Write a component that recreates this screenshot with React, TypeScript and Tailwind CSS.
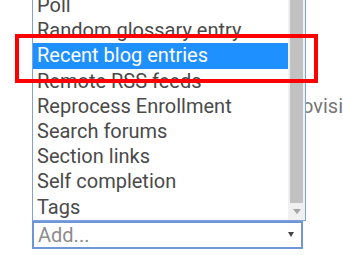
import React from 'react'

const options = [
  'Poll',
  'Random glossary entry',
  'Recent blog entries',
  'Remote RSS feeds',
  'Reprocess Enrollment',
  'Search forums',
  'Section links',
  'Self completion',
  'Tags',
]

const selected = 'Recent blog entries'

function ScrollBar() {
  return (
    <div className="flex w-[17px] flex-col bg-[#f0f0f0]">
      <div className="mx-[2px] flex-1 bg-[#c1c1c1]" />
      <div className="flex h-[17px] items-center justify-center">
        <svg width="8" height="5" viewBox="0 0 8 5">
          <polygon points="0,0 8,0 4,5" fill="#a3a3a3" />
        </svg>
      </div>
    </div>
  )
}

export default function App() {
  return (
    <div className="relative h-[276px] w-[343px] overflow-hidden bg-white font-['Roboto','Liberation_Sans',sans-serif] text-[20px]">
      <div className="-mt-[8px] ml-[32px] flex">
        <div className="relative z-10 flex w-[275px] border border-[#7fa1dc] bg-white">
          <ul className="flex-1">
            {options.map((o) => (
              <li
                key={o}
                className={
                  o === selected
                    ? 'h-[25.2px] whitespace-nowrap bg-[#1e90ff] pl-[4px] leading-[25.2px] text-white'
                    : 'h-[25.2px] whitespace-nowrap pl-[4px] leading-[25.2px] text-[#4a4a4a]'
                }
              >
                {o}
              </li>
            ))}
          </ul>
          <ScrollBar />
        </div>
        <div className="-ml-[4px] mt-[101.8px] whitespace-nowrap leading-[25.2px] text-[#777]">ovisi</div>
      </div>
      <div className="ml-[32px] flex h-[28px] w-[271px] items-center justify-between border-2 border-[#7196d8] pl-[4px] pr-[7px] text-[#8c8c8c]">
        <span>Add...</span>
        <svg width="6" height="5" viewBox="0 0 6 5">
          <polygon points="0,0 6,0 3,5" fill="#444" />
        </svg>
      </div>
      <div className="pointer-events-none absolute left-[15px] top-[34px] z-20 h-[49px] w-[303px] border-4 border-[#ff0000]" />
    </div>
  )
}
